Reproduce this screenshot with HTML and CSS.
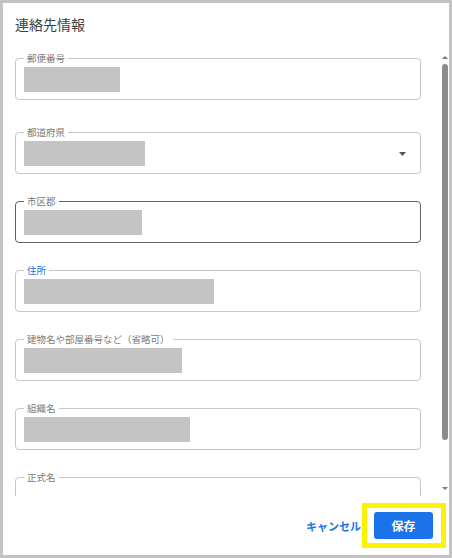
FILE: index.html
```html
<!DOCTYPE html>
<html lang="ja">
<head>
<meta charset="utf-8">
<title>連絡先情報</title>
<link rel="stylesheet" href="styles.css">
</head>
<body>
  <header class="dialog-header">
    <h1 class="dialog-title">連絡先情報</h1>
  </header>

  <div class="dialog-body">
    <div class="fields">
      <fieldset class="field field-first">
        <legend class="field-label">郵便番号</legend>
        <div class="field-row"><div class="redacted w-zip"></div></div>
      </fieldset>

      <fieldset class="field">
        <legend class="field-label">都道府県</legend>
        <div class="field-row">
          <div class="redacted w-pref"></div>
          <svg class="select-arrow" width="7" height="4" viewBox="0 0 7 4" aria-hidden="true"><polygon points="0,0 7,0 3.5,4" fill="#555"/></svg>
        </div>
      </fieldset>

      <fieldset class="field field-hover">
        <legend class="field-label">市区郡</legend>
        <div class="field-row"><div class="redacted w-city"></div></div>
      </fieldset>

      <fieldset class="field">
        <legend class="field-label label-accent">住所</legend>
        <div class="field-row"><div class="redacted w-addr"></div></div>
      </fieldset>

      <fieldset class="field">
        <legend class="field-label">建物名や部屋番号など（省略可）</legend>
        <div class="field-row"><div class="redacted w-bldg"></div></div>
      </fieldset>

      <fieldset class="field">
        <legend class="field-label">組織名</legend>
        <div class="field-row"><div class="redacted w-org"></div></div>
      </fieldset>

      <fieldset class="field">
        <legend class="field-label">正式名</legend>
        <div class="field-row"></div>
      </fieldset>
    </div>

    <div class="scrollbar" aria-hidden="true">
      <svg class="sb-arrow sb-up" width="6" height="3" viewBox="0 0 6 3"><polygon points="0,3 6,3 3,0" fill="#777"/></svg>
      <div class="sb-thumb"></div>
      <svg class="sb-arrow sb-down" width="6" height="3" viewBox="0 0 6 3"><polygon points="0,0 6,0 3,3" fill="#777"/></svg>
    </div>
  </div>

  <footer class="dialog-footer">
    <button class="btn-text" type="button">キャンセル</button>
    <div class="highlight">
      <button class="btn-primary" type="button">保存</button>
    </div>
  </footer>
</body>
</html>
```

FILE: styles.css
```css
html {
  margin: 0;
  padding: 0;
}

body {
  margin: 0;
  width: 452px;
  height: 558px;
  box-sizing: border-box;
  border: 3px solid #c3c3c3;
  background: #ffffff;
  display: flex;
  flex-direction: column;
  overflow: hidden;
  font-family: "Noto Sans CJK JP", "Noto Sans", "Liberation Sans", sans-serif;
}

.dialog-header {
  height: 45px;
  box-sizing: border-box;
  padding: 11px 12px 0;
  flex-shrink: 0;
}

.dialog-title {
  margin: 0;
  font-size: 14px;
  line-height: 20px;
  font-weight: 400;
  color: #3c4043;
}

.dialog-body {
  height: 448px;
  flex-shrink: 0;
  display: flex;
}

.fields {
  flex: 1;
  overflow: hidden;
  padding: 4px 20px 0 12px;
  display: flex;
  flex-direction: column;
  gap: 21px;
}

.field {
  flex-shrink: 0;
  margin: 0;
  padding: 3px 8px 7px;
  border: 1px solid #c7c7c7;
  border-radius: 4px;
  min-inline-size: 0;
}

.field-first {
  margin-bottom: 5px;
}

.field-hover {
  border-color: #626262;
}

.field-label {
  padding: 0 3px;
  font-size: 9.5px;
  line-height: 12px;
  color: #7a7a7a;
}

.label-accent {
  color: #1a73e8;
}

.field-row {
  height: 25px;
  display: flex;
  align-items: center;
}

.redacted {
  height: 25px;
  background: #c4c4c4;
}

.w-zip { width: 96px; }
.w-pref { width: 121px; }
.w-city { width: 118px; }
.w-addr { width: 190px; }
.w-bldg { width: 158px; }
.w-org { width: 166px; }

.select-arrow {
  margin-left: auto;
  margin-right: 6px;
  display: block;
}

.scrollbar {
  width: 8px;
  flex-shrink: 0;
  box-sizing: border-box;
  padding: 8px 0 6px;
  display: flex;
  flex-direction: column;
  align-items: center;
}

.sb-arrow {
  display: block;
  flex-shrink: 0;
}

.sb-up {
  margin-bottom: 5px;
}

.sb-thumb {
  width: 6px;
  height: 376px;
  border-radius: 3px;
  background: #8b8b8b;
  flex-shrink: 0;
}

.sb-down {
  margin-top: auto;
}

.dialog-footer {
  flex: 1;
  display: flex;
  justify-content: flex-end;
  align-items: center;
  padding: 0 3px 0 0;
}

.btn-text {
  border: none;
  background: none;
  padding: 0;
  margin: 0 1px 0 0;
  font-family: inherit;
  font-size: 11px;
  font-weight: 700;
  line-height: 16px;
  color: #1a73e8;
  cursor: pointer;
}

.highlight {
  border: 5px solid #fff200;
  padding: 4px 8px 4px 7px;
  display: flex;
}

.btn-primary {
  width: 59px;
  height: 27px;
  border: none;
  border-radius: 3px;
  background: #1a73e8;
  color: #ffffff;
  font-family: inherit;
  font-size: 12px;
  font-weight: 700;
  padding: 0;
  cursor: pointer;
}
```
